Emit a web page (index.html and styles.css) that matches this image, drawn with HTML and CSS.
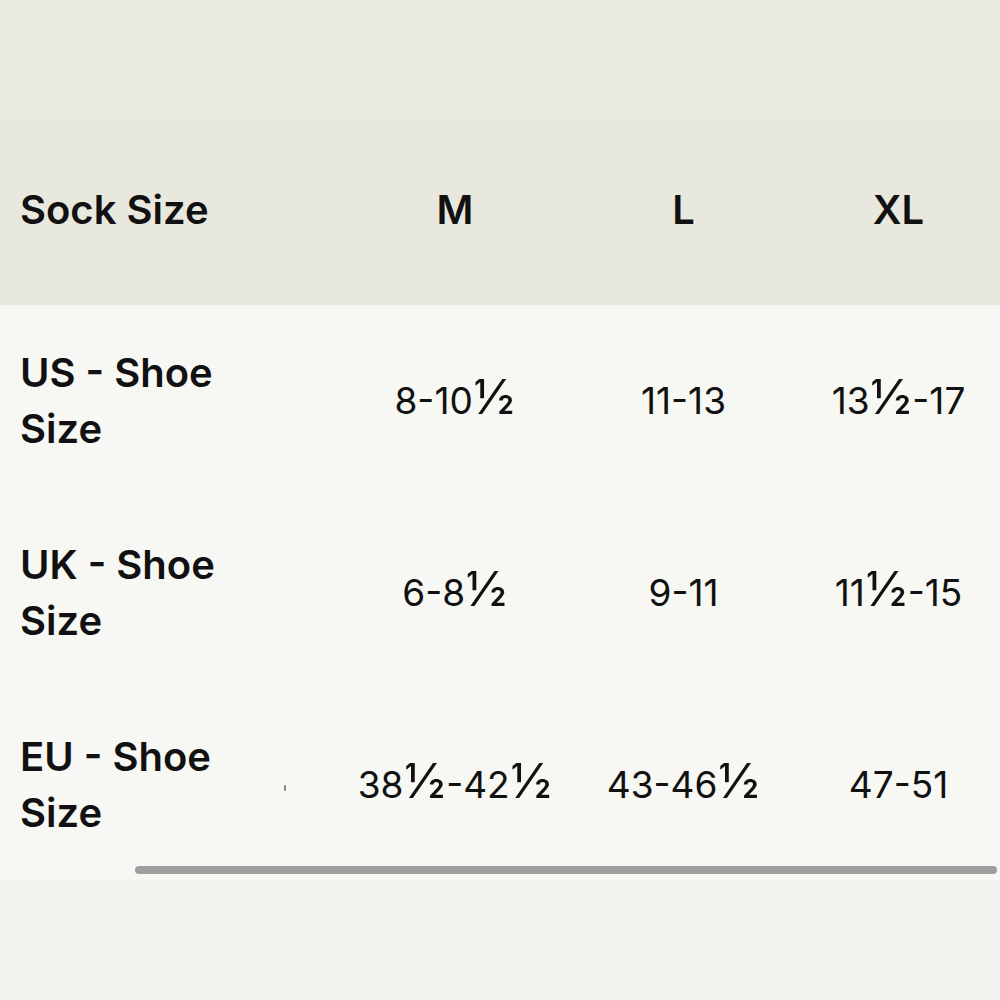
FILE: index.html
```html
<!DOCTYPE html>
<html>
<head>
<meta charset="utf-8">
<link rel="stylesheet" href="styles.css">
</head>
<body>
<div class="page">
  <div class="top"></div>
  <div class="table-wrap">
    <div class="row head">
      <div class="cell label">Sock Size</div>
      <div class="cell val">M</div>
      <div class="cell val">L</div>
      <div class="cell val">XL</div>
    </div>
    <div class="body">
      <div class="row">
        <div class="cell label">US - Shoe<br>Size</div>
        <div class="cell val">8-10<span class="frac">½</span></div>
        <div class="cell val">11-13</div>
        <div class="cell val">13<span class="frac">½</span>-17</div>
      </div>
      <div class="row">
        <div class="cell label">UK - Shoe<br>Size</div>
        <div class="cell val">6-8<span class="frac">½</span></div>
        <div class="cell val">9-11</div>
        <div class="cell val">11<span class="frac">½</span>-15</div>
      </div>
      <div class="row">
        <div class="cell label">EU - Shoe<br>Size<span class="dot"></span></div>
        <div class="cell val">38<span class="frac">½</span>-42<span class="frac">½</span></div>
        <div class="cell val">43-46<span class="frac">½</span></div>
        <div class="cell val">47-51</div>
      </div>
      <div class="scrollbar"><div class="thumb"></div></div>
    </div>
  </div>
  <div class="bottom"></div>
</div>
</body>
</html>
```
FILE: styles.css
```css
html, body {
  margin: 0;
  padding: 0;
}
body {
  background: #f2f3ee;
  font-family: "Inter", "Noto Sans", sans-serif;
  color: #111;
}
.page {
  width: 1000px;
  height: 1000px;
  overflow: hidden;
  display: flex;
  flex-direction: column;
}
.top {
  height: 120px;
  background: #e9e9df;
}
.table-wrap {
  display: flex;
  flex-direction: column;
}
.row {
  display: grid;
  grid-template-columns: 340px 230px 227px 203px;
  align-items: center;
  height: 192px;
}
.head {
  height: 185px;
  background: #e9e8de;
  padding-bottom: 6px;
  box-sizing: border-box;
}
.body {
  position: relative;
  background: #f7f7f3;
}
.cell {
  line-height: 56px;
}
.label {
  padding-left: 20px;
  font-size: 40px;
  font-weight: 600;
  position: relative;
}
.head .val {
  font-size: 40px;
  font-weight: 600;
}
.val {
  text-align: center;
  font-size: 37px;
  font-weight: 400;
}
.frac {
  font-size: 1.3em;
  line-height: 0;
  margin: 0 1px;
}
.dot {
  position: absolute;
  left: 284px;
  top: 56px;
  width: 2px;
  height: 6px;
  background: #888;
  border-radius: 1px;
}
.scrollbar {
  position: absolute;
  left: 135px;
  right: 3px;
  bottom: 7px;
  height: 8px;
}
.thumb {
  height: 100%;
  background: #9e9e9e;
  border-radius: 4px;
}
.bottom {
  flex: 1;
  background: #f2f3ee;
}
```
